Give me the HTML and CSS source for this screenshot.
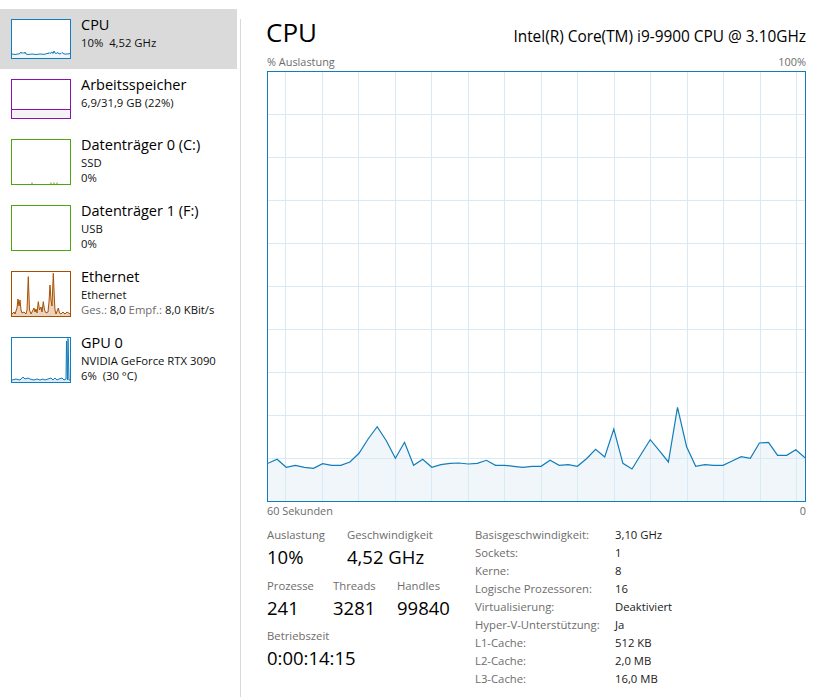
FILE: index.html
```html
<!DOCTYPE html>
<html lang="de">
<head>
<meta charset="utf-8">
<title>Task-Manager – Leistung</title>
<link rel="stylesheet" href="styles.css">
</head>
<body>
<div class="app">
  <nav class="sidebar">
    <div class="item selected">
      <div class="thumb cpu">
        <svg viewBox="0 0 58 38" preserveAspectRatio="none">
          <polyline class="fill" points="0,34 3,34.5 6,34 8,33.5 9,32 10,33.5 11,32.5 12,33.5 13,32 14,34 16,34.5 20,34 24,34.5 28,34 32,34.3 34,34 35,33 36,34 37,32.5 38,33.5 40,32 41,33.5 42,31 43,33 44,33.5 46,32.5 47,34 49,33.5 50,32.5 52,34 56,34 58,33.5 58,38 0,38"/>
          <polyline class="line" points="0,34 3,34.5 6,34 8,33.5 9,32 10,33.5 11,32.5 12,33.5 13,32 14,34 16,34.5 20,34 24,34.5 28,34 32,34.3 34,34 35,33 36,34 37,32.5 38,33.5 40,32 41,33.5 42,31 43,33 44,33.5 46,32.5 47,34 49,33.5 50,32.5 52,34 56,34 58,33.5"/>
        </svg>
      </div>
      <div class="info">
        <div class="title">CPU</div>
        <div class="sub">10%&nbsp; 4,52 GHz</div>
      </div>
    </div>
    <div class="item">
      <div class="thumb mem">
        <svg viewBox="0 0 58 38" preserveAspectRatio="none">
          <rect class="fill" x="0" y="29.5" width="58" height="8.5"/>
          <line class="line" x1="0" y1="29.5" x2="58" y2="29.5"/>
        </svg>
      </div>
      <div class="info">
        <div class="title">Arbeitsspeicher</div>
        <div class="sub">6,9/31,9 GB (22%)</div>
      </div>
    </div>
    <div class="item tall">
      <div class="thumb disk">
        <svg viewBox="0 0 58 44" preserveAspectRatio="none">
          <rect class="dot" x="19.5" y="42.5" width="1" height="1.5"/>
          <rect class="dot" x="38.5" y="42.5" width="1" height="1.5"/>
          <rect class="dot" x="41.5" y="42.5" width="1" height="1.5"/>
          <rect class="dot" x="44.5" y="42.5" width="1" height="1.5"/>
        </svg>
      </div>
      <div class="info">
        <div class="title">Datenträger 0 (C:)</div>
        <div class="sub">SSD</div>
        <div class="sub">0%</div>
      </div>
    </div>
    <div class="item tall">
      <div class="thumb disk">
        <svg viewBox="0 0 58 44" preserveAspectRatio="none"></svg>
      </div>
      <div class="info">
        <div class="title">Datenträger 1 (F:)</div>
        <div class="sub">USB</div>
        <div class="sub">0%</div>
      </div>
    </div>
    <div class="item tall">
      <div class="thumb eth">
        <svg viewBox="0 0 58 44" preserveAspectRatio="none">
          <polyline class="fill" points="0,42 2,40 3,42 5,36 6,27 7,34 8,28 9,38 10,41 12,40 14,42 15,38 16.3,4.7 17.5,38 19,42 21,38 22,36 23,40 24,37 25,41 26.3,29.7 27.5,38 29,35 30,40 31.3,29.7 32.5,38 34,41 36,40 37,30 38,13 39,28 40,34 41.3,1.3 42.5,30 43,38 44,42 46.3,36 47.5,41 49,42 51,40 53,42 55,40 58,42 58,44 0,44"/>
          <polyline class="line" points="0,42 2,40 3,42 5,36 6,27 7,34 8,28 9,38 10,41 12,40 14,42 15,38 16.3,4.7 17.5,38 19,42 21,38 22,36 23,40 24,37 25,41 26.3,29.7 27.5,38 29,35 30,40 31.3,29.7 32.5,38 34,41 36,40 37,30 38,13 39,28 40,34 41.3,1.3 42.5,30 43,38 44,42 46.3,36 47.5,41 49,42 51,40 53,42 55,40 58,42"/>
        </svg>
      </div>
      <div class="info">
        <div class="title">Ethernet</div>
        <div class="sub">Ethernet</div>
        <div class="sub"><span class="muted">Ges.:</span> 8,0 <span class="muted">Empf.:</span> 8,0 KBit/s</div>
      </div>
    </div>
    <div class="item tall">
      <div class="thumb gpu">
        <svg viewBox="0 0 58 44" preserveAspectRatio="none">
          <polyline class="fill" points="0,42 4,41 8,42 10,40 11,39 13,41 16,40 18,41 22,42 25,41 28,42 31,41 33,42 36,41 39,40 41,42 43,40 45,42 47,41 50,40 52,42 54,41 54.5,3 55.5,42 56,0.5 57,42 58,42 58,44 0,44"/>
          <polyline class="line" points="0,42 4,41 8,42 10,40 11,39 13,41 16,40 18,41 22,42 25,41 28,42 31,41 33,42 36,41 39,40 41,42 43,40 45,42 47,41 50,40 52,42 54,41 54.5,3 55.5,42 56,0.5 57,42 58,42"/>
        </svg>
      </div>
      <div class="info">
        <div class="title">GPU 0</div>
        <div class="sub">NVIDIA GeForce RTX 3090</div>
        <div class="sub">6%&nbsp; (30 °C)</div>
      </div>
    </div>
  </nav>
  <div class="divider"></div>
  <main class="main">
    <header class="head">
      <h1 class="heading">CPU</h1>
      <div class="model">Intel(R) Core(TM) i9-9900 CPU @ 3.10GHz</div>
    </header>
    <div class="axis axis-top"><span>% Auslastung</span><span>100%</span></div>
    <div class="chart">
      <svg viewBox="0 0 537 429" width="537" height="429">
        <polygon class="area" points="0,391.3 9.1,387.3 18.2,395.3 27.3,393.3 36.4,395.3 45.5,396.3 54.6,391.7 63.7,393.3 72.8,393.3 81.9,390 91,381.3 100.1,367 109.2,354.7 118.3,368.7 127.4,386.3 136.5,370.3 145.6,393.3 154.7,387.3 163.8,395.3 172.9,392.7 182,391.3 191.1,391 200.2,392 209.3,391.3 218.4,388.3 227.5,393.3 236.6,393.3 245.7,394.3 254.8,395.3 263.9,394.3 273,394.3 282.1,388.3 291.2,393.3 300.3,392.7 309.4,394.3 318.5,386.7 327.6,377.3 336.7,385 345.8,357 354.9,391.3 364,397 373.1,382.3 382.2,367.7 391.3,378.7 400.4,390 409.5,335.3 418.6,374.7 427.7,394.3 436.8,392.7 445.9,393.3 455,393.3 464.1,389 473.2,384.7 482.3,386.3 491.4,371 500.5,370.3 509.6,383.3 518.7,383.3 527.8,377.7 537,385.7 537,429 0,429"/>
        <path class="grid" d="M17.5 0V429M54.5 0V429M90.5 0V429M127.5 0V429M163.5 0V429M200.5 0V429M236.5 0V429M273.5 0V429M309.5 0V429M346.5 0V429M382.5 0V429M419.5 0V429M455.5 0V429M492.5 0V429M528.5 0V429M0 42.5H537M0 85.5H537M0 128.5H537M0 171.5H537M0 214.5H537M0 257.5H537M0 300.5H537M0 343.5H537M0 386.5H537"/>
        <polyline class="plot" points="0,391.3 9.1,387.3 18.2,395.3 27.3,393.3 36.4,395.3 45.5,396.3 54.6,391.7 63.7,393.3 72.8,393.3 81.9,390 91,381.3 100.1,367 109.2,354.7 118.3,368.7 127.4,386.3 136.5,370.3 145.6,393.3 154.7,387.3 163.8,395.3 172.9,392.7 182,391.3 191.1,391 200.2,392 209.3,391.3 218.4,388.3 227.5,393.3 236.6,393.3 245.7,394.3 254.8,395.3 263.9,394.3 273,394.3 282.1,388.3 291.2,393.3 300.3,392.7 309.4,394.3 318.5,386.7 327.6,377.3 336.7,385 345.8,357 354.9,391.3 364,397 373.1,382.3 382.2,367.7 391.3,378.7 400.4,390 409.5,335.3 418.6,374.7 427.7,394.3 436.8,392.7 445.9,393.3 455,393.3 464.1,389 473.2,384.7 482.3,386.3 491.4,371 500.5,370.3 509.6,383.3 518.7,383.3 527.8,377.7 537,385.7"/>
      </svg>
    </div>
    <div class="axis axis-bottom"><span>60 Sekunden</span><span>0</span></div>
    <section class="stats">
      <div class="live">
        <div class="stat-row">
          <div class="stat w-util"><div class="label">Auslastung</div><div class="value">10%</div></div>
          <div class="stat"><div class="label">Geschwindigkeit</div><div class="value">4,52 GHz</div></div>
        </div>
        <div class="stat-row">
          <div class="stat w-proc"><div class="label">Prozesse</div><div class="value">241</div></div>
          <div class="stat w-thr"><div class="label">Threads</div><div class="value">3281</div></div>
          <div class="stat"><div class="label">Handles</div><div class="value">99840</div></div>
        </div>
        <div class="stat-row">
          <div class="stat"><div class="label">Betriebszeit</div><div class="value">0:00:14:15</div></div>
        </div>
      </div>
      <dl class="specs">
        <dt>Basisgeschwindigkeit:</dt><dd>3,10 GHz</dd>
        <dt>Sockets:</dt><dd>1</dd>
        <dt>Kerne:</dt><dd>8</dd>
        <dt>Logische Prozessoren:</dt><dd>16</dd>
        <dt>Virtualisierung:</dt><dd>Deaktiviert</dd>
        <dt>Hyper-V-Unterstützung:</dt><dd>Ja</dd>
        <dt>L1-Cache:</dt><dd>512 KB</dd>
        <dt>L2-Cache:</dt><dd>2,0 MB</dd>
        <dt>L3-Cache:</dt><dd>16,0 MB</dd>
      </dl>
    </section>
  </main>
</div>
</body>
</html>
```
FILE: styles.css
```css
* { box-sizing: border-box; }

html, body {
  margin: 0;
  padding: 0;
  background: #ffffff;
}

body {
  font-family: "Open Sans", "Noto Sans", sans-serif;
  color: #000000;
  width: 822px;
  height: 697px;
  overflow: hidden;
}

.app {
  display: flex;
  height: 697px;
}

/* ---------- sidebar ---------- */
.sidebar {
  width: 237px;
  flex: none;
  padding-top: 9px;
}

.item {
  display: flex;
  align-items: flex-start;
  height: 60px;
  padding: 6px 0 0 11px;
}

.item.tall { height: 66px; }

.item.selected { background: #dadada; }

.thumb {
  flex: none;
  width: 60px;
  height: 40px;
  margin-top: 4px;
  border: 1px solid;
  background: #ffffff;
}

.item.tall .thumb { height: 46px; }

.thumb svg {
  display: block;
  width: 100%;
  height: 100%;
}

.thumb .line { fill: none; stroke-width: 1; }

.thumb.cpu { border-color: #117dbb; }
.thumb.cpu .line { stroke: #117dbb; }
.thumb.cpu .fill { fill: #f1f6fa; }

.thumb.mem { border-color: #8b12ae; }
.thumb.mem .line { stroke: #8b12ae; }
.thumb.mem .fill { fill: #f4f2f4; }

.thumb.disk { border-color: #4da60c; }
.thumb.disk .dot { fill: #4da60c; }

.thumb.eth { border-color: #a74f01; }
.thumb.eth .line { stroke: #a74f01; }
.thumb.eth .fill { fill: #ecd3bd; }

.thumb.gpu { border-color: #117dbb; }
.thumb.gpu .line { stroke: #117dbb; }
.thumb.gpu .fill { fill: #dcebf5; }

.info {
  margin-left: 10px;
  white-space: nowrap;
}

.title {
  font-size: 14.5px;
  line-height: 20px;
}

.sub {
  font-size: 11.3px;
  line-height: 15px;
  color: #111111;
}

.muted { color: #6d6d6d; }

.divider {
  flex: none;
  width: 1px;
  margin: 19px 0 0 3px;
  background: #d9d9d9;
}

/* ---------- main ---------- */
.main {
  flex: 1;
  padding: 19px 16px 0 26px;
}

.head {
  display: flex;
  justify-content: space-between;
  align-items: baseline;
}

.heading {
  margin: 0 0 0 -1px;
  font-weight: 400;
  font-size: 26px;
  line-height: 27px;
}

.model {
  font-size: 15.4px;
  line-height: 18px;
}

.axis {
  display: flex;
  justify-content: space-between;
  font-size: 10.9px;
  line-height: 14px;
  color: #6d6d6d;
}

.axis-top { margin-top: 9px; }
.axis-bottom { margin-top: 2px; }

.chart {
  margin-top: 2px;
  width: 539px;
  height: 431px;
  border: 1px solid #117dbb;
}

.chart svg { display: block; }

.chart .area { fill: #f1f6fa; }
.chart .grid { fill: none; stroke: #d9eaf4; stroke-width: 1; }
.chart .plot { fill: none; stroke: #117dbb; stroke-width: 1.2; stroke-linejoin: miter; }

/* ---------- stats ---------- */
.stats {
  display: flex;
  margin-top: 8px;
}

.live {
  width: 208px;
  flex: none;
  display: flex;
  flex-direction: column;
  gap: 6.5px;
}

.stat-row { display: flex; }

.w-util { width: 80px; }
.w-proc { width: 66px; }
.w-thr { width: 64px; }

.label {
  font-size: 11.3px;
  line-height: 18px;
  color: #6d6d6d;
  white-space: nowrap;
}

.value {
  font-size: 18.5px;
  line-height: 26px;
  white-space: nowrap;
}

.specs {
  margin: 0;
  display: grid;
  grid-template-columns: 140px auto;
  font-size: 11.3px;
  line-height: 18px;
}

.specs dt {
  color: #6d6d6d;
  white-space: nowrap;
}

.specs dd {
  margin: 0;
  color: #1a1a1a;
  white-space: nowrap;
}
```
